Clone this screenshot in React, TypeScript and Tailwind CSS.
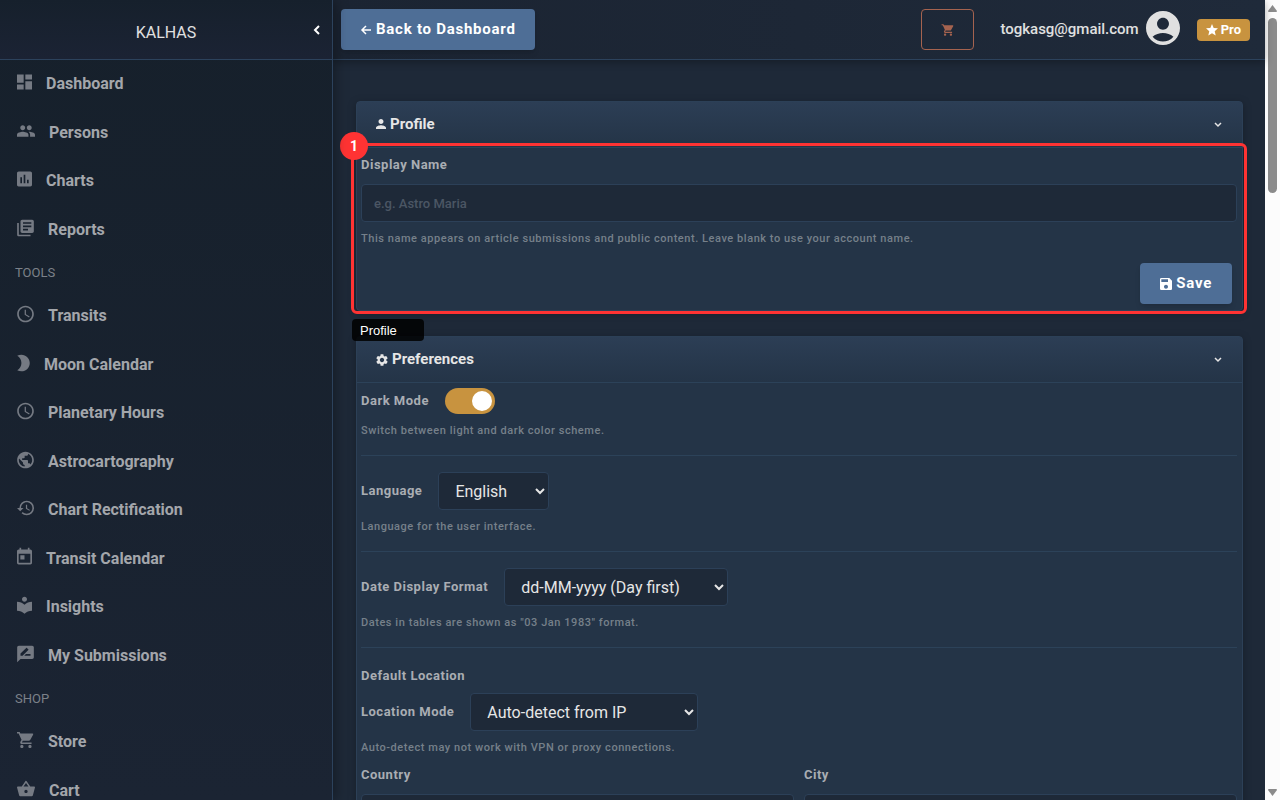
import React, { useState } from "react";
import type { IconType } from "react-icons";
import {
  MdAccessTime,
  MdAccountCircle,
  MdAssessment,
  MdBrightness2,
  MdDashboard,
  MdHistory,
  MdLibraryBooks,
  MdLocalLibrary,
  MdPeople,
  MdPerson,
  MdPublic,
  MdRateReview,
  MdSave,
  MdSettings,
  MdShoppingBasket,
  MdShoppingCart,
  MdStar,
  MdToday,
} from "react-icons/md";

interface NavItem {
  label: string;
  icon: IconType;
  // horizontal crop of the 24 unit icon box
  viewBox: string;
  width: string;
}

interface NavGroup {
  title?: string;
  items: NavItem[];
}

const navGroups: NavGroup[] = [
  {
    items: [
      { label: "Dashboard", icon: MdDashboard, viewBox: "3 0 18 24", width: "w-[15px]" },
      { label: "Persons", icon: MdPeople, viewBox: "1 0 22 24", width: "w-[18px]" },
      { label: "Charts", icon: MdAssessment, viewBox: "3 0 18 24", width: "w-[15px]" },
      { label: "Reports", icon: MdLibraryBooks, viewBox: "2 0 20 24", width: "w-[17px]" },
    ],
  },
  {
    title: "TOOLS",
    items: [
      { label: "Transits", icon: MdAccessTime, viewBox: "2 0 20 24", width: "w-[17px]" },
      { label: "Moon Calendar", icon: MdBrightness2, viewBox: "5 0 15 24", width: "w-[13px]" },
      { label: "Planetary Hours", icon: MdAccessTime, viewBox: "2 0 20 24", width: "w-[17px]" },
      { label: "Astrocartography", icon: MdPublic, viewBox: "2 0 20 24", width: "w-[17px]" },
      { label: "Chart Rectification", icon: MdHistory, viewBox: "1 0 21 24", width: "w-[17px]" },
      { label: "Transit Calendar", icon: MdToday, viewBox: "3 0 18 24", width: "w-[15px]" },
      { label: "Insights", icon: MdLocalLibrary, viewBox: "3 0 18 24", width: "w-[15px]" },
      { label: "My Submissions", icon: MdRateReview, viewBox: "2 0 20 24", width: "w-[17px]" },
    ],
  },
  {
    title: "SHOP",
    items: [
      { label: "Store", icon: MdShoppingCart, viewBox: "1 0 21 24", width: "w-[17px]" },
      { label: "Cart", icon: MdShoppingBasket, viewBox: "1 0 22 24", width: "w-[18px]" },
    ],
  },
];

const Sidebar: React.FC = () => (
  <aside className="relative z-20 flex w-[333px] shrink-0 flex-col border-r border-[#2c425c] bg-linear-to-b from-[#16202b] to-[#1b2433] shadow-[2px_0_12px_rgba(0,0,0,0.35)]">
    <div className="relative flex h-[60px] shrink-0 items-center justify-center border-b border-[#2c425c] bg-linear-to-b from-[#16202c] to-[#1b2334] pt-[6px]">
      <span className="text-base text-[#e0e0e0]">KALHAS</span>
      <button aria-label="Collapse menu" className="absolute top-[25px] right-3 text-white">
        <svg viewBox="0 0 7 10" className="h-[10px] w-[7px]" fill="none" stroke="currentColor" strokeWidth={2}>
          <path d="M6 1 L2 5 L6 9" />
        </svg>
      </button>
    </div>
    <nav className="min-h-0 flex-1 overflow-hidden">
      {navGroups.map((group) => (
        <div key={group.items[0].label}>
          {group.title && (
            <h2 className="flex h-[38px] items-center px-[15px] pb-px text-[13px] text-[#7c8189]">{group.title}</h2>
          )}
          <ul>
            {group.items.map(({ label, icon: Icon, viewBox, width }) => (
              <li key={label} className="odd:h-12 even:h-[49px]">
                <a href="#" className="flex h-full items-center gap-[14px] px-[17px] font-bold text-[#a3a6ab]">
                  <Icon viewBox={viewBox} className={`mb-1 h-5 shrink-0 text-[#757a83] ${width}`} />
                  {label}
                </a>
              </li>
            ))}
          </ul>
        </div>
      ))}
    </nav>
  </aside>
);

const TopBar: React.FC = () => (
  <header className="relative z-10 flex h-[60px] shrink-0 items-center justify-between border-b border-[#2c425c] bg-linear-to-r from-[#1b2432] to-[#1f2a3a] pr-[15px] pl-2 shadow-[0_2px_8px_rgba(0,0,0,0.3)]">
    <button className="flex h-[41px] items-center gap-1 rounded-sm bg-[#4e6e96] px-[19px] text-[15px] font-bold tracking-wider text-white shadow-md">
      <svg viewBox="0 0 12 12" className="h-3 w-3" fill="none" stroke="currentColor" strokeWidth={1.5}>
        <path d="M11 6 H2 M6 2 L2 6 L6 10" />
      </svg>
      Back to Dashboard
    </button>
    <div className="flex items-center">
      <button
        aria-label="Cart"
        className="mr-[26px] flex h-[41px] w-[53px] items-center justify-center rounded-sm border border-[#a5634f] text-[#a5634f]"
      >
        <MdShoppingCart className="h-[14px] w-[14px]" />
      </button>
      <span className="mr-[7px] text-[15px] font-medium text-[#e0e0e0]">togkasg@gmail.com</span>
      <MdAccountCircle viewBox="2 2 20 20" className="mr-[17px] mb-[3px] h-[34px] w-[34px] text-[#e0e0e0]" />
      <span className="flex h-[22px] items-center gap-[3px] rounded-sm bg-[#c8933f] px-[9px] text-[13px] font-bold text-white">
        <MdStar viewBox="2 2 20 20" className="h-3 w-3" />
        Pro
      </span>
    </div>
  </header>
);

interface CardProps {
  title: string;
  icon: React.ReactNode;
  children: React.ReactNode;
}

const Card: React.FC<CardProps> = ({ title, icon, children }) => (
  <section className="relative rounded-sm border border-[#2c4057] bg-[#243447] shadow-[0_2px_8px_rgba(0,0,0,0.25)]">
    <button className="flex h-[46px] w-full items-center justify-between border-b border-[#2c4259] bg-linear-to-b from-[#2c3e55] to-[#243447] px-5 pl-[19px] text-[15px] font-bold text-[#e6e6e6]">
      <span className="flex items-center gap-1">
        {icon}
        {title}
      </span>
      <svg viewBox="0 0 8 6" className="h-[6px] w-2" fill="none" stroke="currentColor" strokeWidth={1.5}>
        <path d="M1 1 L4 4 L7 1" />
      </svg>
    </button>
    {children}
  </section>
);

const labelStyle = "text-[13px] leading-[18px] font-bold tracking-[0.5px] text-[#a9adb3]";
const helpStyle = "mt-2 text-[11px] leading-[17px] font-medium tracking-wider text-[#76808a]";
const fieldStyle = "h-[38px] rounded-sm border border-[#2c4058] bg-[#1e2938] px-3";

interface SelectRowProps {
  id: string;
  label: string;
  options: string[];
  help: string;
  width: string;
}

const SelectRow: React.FC<SelectRowProps> = ({ id, label, options, help, width }) => (
  <>
    <div className="flex items-center gap-4">
      <label htmlFor={id} className={labelStyle}>
        {label}
      </label>
      <select id={id} className={`${fieldStyle} ${width} text-base text-[#e6e6e6]`}>
        {options.map((option) => (
          <option key={option}>{option}</option>
        ))}
      </select>
    </div>
    <p className={helpStyle}>{help}</p>
  </>
);

const ProfileCard: React.FC = () => (
  <Card title="Profile" icon={<MdPerson viewBox="4 3 16 18" className="mb-px h-3 w-[10px]" />}>
    <div className="pt-2 pr-[5px] pb-[6px] pl-1">
      <label htmlFor="display-name" className={`block ${labelStyle}`}>
        Display Name
      </label>
      <input
        id="display-name"
        placeholder="e.g. Astro Maria"
        className={`mt-[10px] w-full text-[13px] font-medium text-[#e6e6e6] placeholder:text-[#4b5664] ${fieldStyle}`}
      />
      <p className={helpStyle}>
        This name appears on article submissions and public content. Leave blank to use your account name.
      </p>
      <div className="mt-4 flex justify-end pr-[5px]">
        <button className="flex h-[41px] items-center gap-1 rounded-sm bg-[#4e6e96] px-5 text-[15px] font-bold tracking-wider text-white shadow-md">
          <MdSave viewBox="3 3 18 18" className="h-3 w-3" />
          Save
        </button>
      </div>
    </div>
    {/* numbered tour highlight */}
    <div className="pointer-events-none absolute top-[41px] -right-[5px] -bottom-1 -left-[6px] rounded-md border-3 border-[#ff3333]">
      <span className="absolute -top-[14px] -left-[14px] flex h-7 w-7 items-center justify-center rounded-full bg-[#ff3333] text-sm font-bold text-white">
        1
      </span>
      <span className="absolute top-full -left-[2px] mt-2 flex h-[22px] w-[72px] items-center rounded-sm bg-black/85 px-2 pt-px font-['Liberation_Sans'] text-[13px] text-white">
        Profile
      </span>
    </div>
  </Card>
);

const PreferencesCard: React.FC = () => {
  const [darkMode, setDarkMode] = useState(true);

  return (
    <Card title="Preferences" icon={<MdSettings viewBox="2 2 20 20" className="h-3 w-3" />}>
      <div className="pt-[5px] pr-[5px] pb-4 pl-1">
        <div className="border-b border-[#2c4259] pb-4">
          <div className="flex items-center gap-4">
            <label htmlFor="dark-mode" className={labelStyle}>
              Dark Mode
            </label>
            <input
              id="dark-mode"
              type="checkbox"
              role="switch"
              checked={darkMode}
              onChange={(e) => setDarkMode(e.target.checked)}
              className="h-[26px] w-[50px] appearance-none rounded-full bg-[#4b5664] p-[3px] before:block before:h-5 before:w-5 before:rounded-full before:bg-white checked:bg-[#c8933f] checked:before:translate-x-6"
            />
          </div>
          <p className={helpStyle}>Switch between light and dark color scheme.</p>
        </div>
        <div className="border-b border-[#2c4259] pt-4 pb-4">
          <SelectRow
            id="language"
            label="Language"
            options={["English", "Greek"]}
            help="Language for the user interface."
            width="w-[111px]"
          />
        </div>
        <div className="border-b border-[#2c4259] pt-4 pb-4">
          <SelectRow
            id="date-format"
            label="Date Display Format"
            options={["dd-MM-yyyy (Day first)", "MM-dd-yyyy (Month first)"]}
            help={'Dates in tables are shown as "03 Jan 1983" format.'}
            width="w-[224px]"
          />
        </div>
        <div className="pt-[19px]">
          <h3 className={`mb-2 ${labelStyle}`}>Default Location</h3>
          <SelectRow
            id="location-mode"
            label="Location Mode"
            options={["Auto-detect from IP", "Manual location"]}
            help="Auto-detect may not work with VPN or proxy connections."
            width="w-[228px]"
          />
          <div className="mt-[10px] grid grid-cols-2 gap-[10px]">
            <div>
              <label htmlFor="country" className={`block ${labelStyle}`}>
                Country
              </label>
              <input id="country" className={`mt-[10px] w-full text-[13px] text-[#e6e6e6] ${fieldStyle}`} />
            </div>
            <div>
              <label htmlFor="city" className={`block ${labelStyle}`}>
                City
              </label>
              <input id="city" className={`mt-[10px] w-full text-[13px] text-[#e6e6e6] ${fieldStyle}`} />
            </div>
          </div>
        </div>
      </div>
    </Card>
  );
};

const ScrollRail: React.FC = () => (
  <div aria-hidden="true" className="flex w-[15px] shrink-0 flex-col items-center bg-[#fcfcfc] text-[#8b8b8b]">
    <svg viewBox="0 0 15 18" className="h-[18px] w-[15px]" fill="currentColor">
      <path d="M7.5 5 L12 11 Q12 12 11 12 H4 Q3 12 3 11 Z" />
    </svg>
    <div className="h-[175px] w-[9px] rounded-full bg-[#8b8b8b]" />
    <svg viewBox="0 0 15 18" className="mt-auto h-[18px] w-[15px]" fill="currentColor">
      <path d="M7.5 14 L12 8 Q12 7 11 7 H4 Q3 7 3 8 Z" />
    </svg>
  </div>
);

const App: React.FC = () => {
  return (
    <div className="flex h-screen overflow-hidden bg-[#1e2938] font-[Roboto,sans-serif]">
      <Sidebar />
      <div className="flex min-w-0 flex-1 flex-col">
        <TopBar />
        <main className="flex min-h-0 flex-1 flex-col gap-[25px] overflow-hidden pt-[41px] pr-[22px] pl-[23px] *:shrink-0 *:first:z-10">
          <ProfileCard />
          <PreferencesCard />
        </main>
      </div>
      <ScrollRail />
    </div>
  );
};

export default App;
